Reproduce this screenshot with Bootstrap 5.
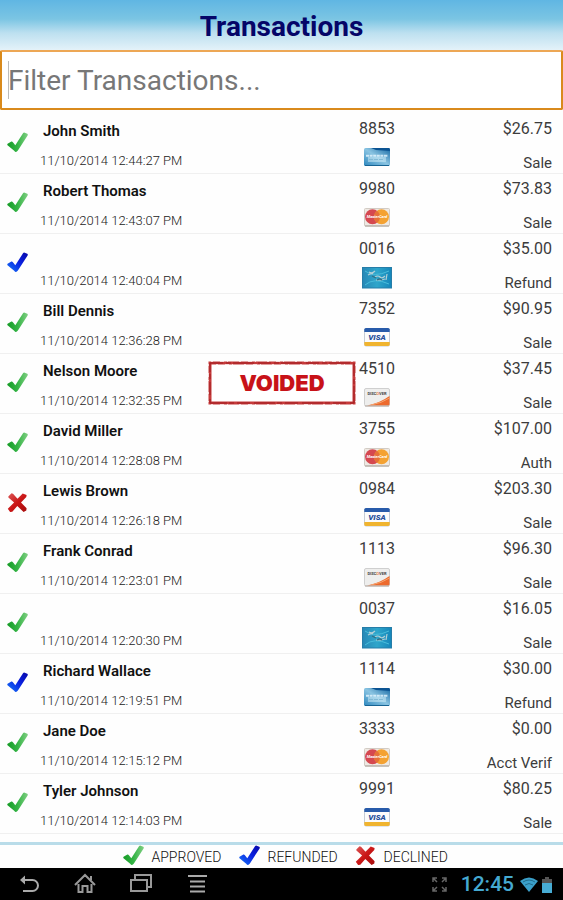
<!DOCTYPE html>
<html lang="en">
<head>
<meta charset="utf-8">
<meta name="viewport" content="width=device-width, initial-scale=1">
<title>Transactions</title>
<link href="https://cdn.jsdelivr.net/npm/bootstrap@5.3.0/dist/css/bootstrap.min.css" rel="stylesheet">
<style>
body { font-family: Roboto, "Noto Sans", sans-serif; font-size: 16px; color: #3c3c3c; background: #fefefe; }
svg { display: block; flex: none; }
.title-bar { height: 50px; padding-top: 2px; background: linear-gradient(#60b6e3, #7bc5e3 38%, #bde0f0 66%, #e4f2f9); }
.title-bar h1 { font-size: 28px; line-height: 50px; font-weight: 700; color: #050568; }
.filter-box { height: 60px; border: 2px solid #d98a1c; border-top-color: #eda755; border-radius: 2px; padding: 0 6px; font-size: 28px; color: #333; }
.filter-box:focus { border-color: #d98a1c; box-shadow: none; }
.filter-box::placeholder { color: #777; }
.filter-wrap::after { content: ""; position: absolute; left: 8px; top: 11px; width: 1px; height: 38px; background: #bbb; }
.txn { height: 60px; border-bottom: 1px solid #f0f0f0; }
.status { width: 40px; padding: 18px 0 0 7px; }
.who { padding-top: 9px; }
.who-name { height: 20px; line-height: 17px; padding-left: 3px; font-size: 15px; font-weight: 600; color: #111; }
.who-time { font-size: 13px; line-height: 16px; margin-top: 10px; font-weight: 300; color: #222; }
.last-four { width: 36px; padding-top: 5px; margin-left: 3px; }
.digits { line-height: 20px; }
.last-four svg { margin-top: 8px; }
.amount { width: 168px; padding: 5px 11px 0 0; }
.kind { font-size: 15px; line-height: 20px; margin-top: 14px; }
.stamp { margin-top: 7px; }
.legend { height: 26px; border-top: 3px solid #b9dce9; font-size: 14px; line-height: 24px; font-weight: 300; color: #111; padding-left: 30px; }
.legend-item { width: 116px; }
.legend-item span { margin-left: 8px; }
.sys-bar { height: 33px; background: #000; padding: 0 11px 0 17px; }
.sys-bar button { width: 24px; height: 24px; margin-right: 32px; }
.clock { font-size: 21px; line-height: 33px; font-weight: 500; color: #45a9d1; margin: 0 6px 0 14px; }
</style>
<script src="https://cdn.jsdelivr.net/npm/bootstrap@5.3.0/dist/js/bootstrap.bundle.min.js"></script>
</head>
<body class="d-flex flex-column min-vh-100">
<svg width="0" height="0" class="position-absolute" aria-hidden="true">
  <defs>
    <linearGradient id="gGreen"><stop offset="0" stop-color="#169c26"/><stop offset=".5" stop-color="#34b445"/><stop offset="1" stop-color="#80cf83"/></linearGradient>
    <linearGradient id="gBlue" x1="1" y1="0" x2="0" y2="1"><stop offset="0" stop-color="#0808a8"/><stop offset=".45" stop-color="#0a20e0"/><stop offset="1" stop-color="#1878f8"/></linearGradient>
    <linearGradient id="gRed" x2="1" y2="1"><stop offset="0" stop-color="#dc5959"/><stop offset=".5" stop-color="#cb1717"/><stop offset="1" stop-color="#a60c0c"/></linearGradient>
    <linearGradient id="gAmex" x1="0" y1="1" x2="1" y2="0"><stop offset="0" stop-color="#2b86bd"/><stop offset=".5" stop-color="#8ac4e2"/><stop offset="1" stop-color="#1769a4"/></linearGradient>
    <linearGradient id="gGift"><stop offset="0" stop-color="#2787b6"/><stop offset=".5" stop-color="#2fa6cb"/><stop offset="1" stop-color="#1586ba"/></linearGradient>
    <path id="tick" d="M.6 11.8 4.4 9.6Q5.2 9.3 5.9 10.3L8.3 13.2 16 1.3Q16.7.2 17.7.7L20.3 1.8Q21.2 2.4 20.6 3.4L10.9 18.4Q9 21.2 7.2 18.7L.5 13.2Q0 12.3.6 11.8Z"/>
  </defs>
  <symbol id="approved" viewBox="0 0 21 21"><use href="#tick" fill="url(#gGreen)"/></symbol>
  <symbol id="refunded" viewBox="0 0 21 21"><use href="#tick" fill="url(#gBlue)"/></symbol>
  <symbol id="declined" viewBox="0 0 21 21"><path fill="url(#gRed)" d="M1.3 4.4 4.5 1.2 6 1.7 10.5 6.7 15.7 1.5 19.6 3.1 19.3 5.1 14 10.5 19.6 16.2 19.3 18.5 16.6 20 10.3 14.1 5.3 19.7 3.1 19.9.8 16.8 7.1 10.4 1.4 5.4Z"/></symbol>
</svg>

<header class="title-bar text-center"><h1 class="m-0">Transactions</h1></header>
<div class="filter-wrap position-relative">
  <input id="filter" type="text" class="form-control filter-box bg-white" placeholder="Filter Transactions..." aria-label="Filter Transactions">
</div>

<ul id="transactions" class="list-unstyled mb-2 mt-1"></ul>

<footer class="mt-auto">
  <div class="legend d-flex justify-content-center">
    <div class="legend-item d-flex"><svg width="21" height="21"><use href="#approved"/></svg><span>APPROVED</span></div>
    <div class="legend-item d-flex"><svg width="21" height="21"><use href="#refunded"/></svg><span>REFUNDED</span></div>
    <div class="legend-item d-flex"><svg width="21" height="21"><use href="#declined"/></svg><span>DECLINED</span></div>
  </div>
  <nav class="sys-bar d-flex align-items-center" aria-label="System">
    <button class="btn p-0 border-0" aria-label="Back"><svg width="24" height="24" fill="none" stroke="#aaa" stroke-width="2"><path d="M6 7h9.500a5.500 5.500 0 0 1 0 11H6"/><path d="M8 2.500 3 7l5 4.500Z" fill="#aaa" stroke="none"/></svg></button>
    <button class="btn p-0 border-0" aria-label="Home"><svg width="24" height="24" fill="none" stroke="#999" stroke-width="2"><path d="m2 12 10-10 10 10M5.500 11v8h4v-6h5v6h4v-8M18 7V3"/></svg></button>
    <button class="btn p-0 border-0" aria-label="Recent apps"><svg width="24" height="24" fill="none" stroke="#999" stroke-width="2"><path d="M2 7h16v11H2zM6 6V2h16v12h-3"/></svg></button>
    <button class="btn p-0 border-0" aria-label="Menu"><svg width="24" height="24" fill="none" stroke="#aaa" stroke-width="2"><path d="M3 3h19M5 8.500h15M5 13.500h15M5 18.500h15"/></svg></button>
    <svg class="ms-auto" width="15" height="15" fill="none" stroke="#666" stroke-width="1.500"><path d="M1 5V1h4M1 1l4 4M10 1h4v4m0-4-4 4M1 10v4h4m-4 0 4-4m5 4h4v-4m0 4-4-4"/></svg>
    <span class="clock">12:45</span>
    <svg width="18" height="15"><path d="M0 4Q9-3 18 4L9 15Z" fill="#3ba0ca"/><path d="M3 5q6-4 12 0M5 8q4-3 8 0" fill="none" stroke="#216c8b"/></svg>
    <svg class="ms-1" width="10" height="16"><path d="M3 0h4v2h3v4H0V2h3z" fill="#555"/><path d="M0 6h10v10H0z" fill="#47acd4"/></svg>
  </nav>
</footer>

<template id="amex"><svg width="28" height="20" role="img" aria-label="American Express"><rect x="1" y="1" width="26" height="18" rx="1.5" fill="url(#gAmex)"/><path d="M8 1H26Q27 1 27 4L13 3Z" fill="#0b5392"/><path d="M3 8.7h22" stroke="#e8f7ff" stroke-width="2" stroke-dasharray="3 .6" opacity=".8"/><path d="M5 10h18v5H5z" fill="#d2edf7" opacity=".5"/><path d="M6 12.5h15" stroke="#82b9d5" stroke-dasharray="4 1"/><path d="M2 18.5h24" stroke="#176393"/></svg></template>
<template id="mastercard"><svg width="28" height="20" role="img" aria-label="MasterCard"><rect x="1.5" y="1.5" width="25" height="17.5" rx="1" fill="#eee9e3" stroke="#d2cbc4"/><circle cx="9.500" cy="9.8" r="7.5" fill="#d54850"/><circle cx="18.5" cy="9.8" r="7.5" fill="#f4a232"/><path d="M14 3.800a7.5 7.5 0 0 1 0 12 7.5 7.5 0 0 1 0-12" fill="#e67139"/><text x="14" y="11" text-anchor="middle" font-size="4" font-style="italic" font-weight="700" fill="#fff">MasterCard</text><path d="M2 19h24" stroke="#aaa198"/></svg></template>
<template id="gift"><svg width="30" height="22" role="img" aria-label="Gift card"><rect x=".5" y=".5" width="29" height="20.5" fill="url(#gGift)" stroke="#267da8"/><path d="M3 4Q12 11 27 4M3 18Q12 10 27 17" stroke="#49bddb" fill="none"/><path d="M7 5q3 2 6-1M6 8q4-2 5-1m2 3q3-2 5 0t5-1m2-2-1 6m-10 0h5l4-1" stroke="#b5cfd6" stroke-width="1.2" fill="none"/><path d="m10 9 4 2m1 2q3-2 5 0" stroke="#326f85" stroke-width="1.3" fill="none"/></svg></template>
<template id="visa"><svg width="28" height="20" role="img" aria-label="Visa"><rect x="1.5" y="1.5" width="25" height="17.5" rx="1.5" fill="#fbfbfb" stroke="#c5ccd6"/><path d="M1.3 5V2.5Q1.3 1 3 1H25Q26.7 1 26.7 2.5V5Z" fill="#285baa"/><path d="M1.3 15H26.7V17.5Q26.7 19 25 19H3Q1.3 19 1.3 17.5Z" fill="#f0b42f"/><text x="14" y="13" text-anchor="middle" font-size="8" font-weight="900" font-style="italic" fill="#28509c">VISA</text></svg></template>
<template id="discover"><svg width="28" height="20" role="img" aria-label="Discover"><rect x="1.5" y="1.5" width="25" height="17.5" rx="1.5" fill="#eeeeed" stroke="#cfcfcf"/><path d="M4 18.5Q17 16 26.5 9V17.5Q26.5 18.5 25 18.5Z" fill="#ed6a2d"/><path d="M8 18Q19 16 26.5 11" stroke="#f6a36e" fill="none"/><text x="14" y="8" text-anchor="middle" font-size="4" font-weight="700" fill="#444">DISC<tspan fill="#ee8550">O</tspan>VER</text><path d="M2 19h24" stroke="#b7aaa1"/></svg></template>
<template id="voided">
  <svg class="stamp" width="148" height="44" role="img" aria-label="Voided">
    <rect x="2" y="2" width="144" height="40" fill="#fff" stroke="#c63a3a" stroke-width="3"/>
    <path d="M2 2h144v40H2Z" fill="none" stroke="#9f1c20" stroke-width="1" stroke-dasharray="13 3 5 2 21 4"/>
    <path d="M3 .5h142M.5 3v38M3 43.5h142M147.5 3v38M8 3.5h130" fill="none" stroke="#f6dcdc" stroke-dasharray="2 7 4 3 1 11"/>
    <text x="74" y="30" text-anchor="middle" font-family="Inter, 'Liberation Sans', sans-serif" font-size="22" font-weight="900" fill="#c81218">VOIDED</text>
  </svg>
</template>
<script>
const transactions = [
  ["approved", "John Smith", "12:44:27", "8853", "amex", "$26.75", "Sale"],
  ["approved", "Robert Thomas", "12:43:07", "9980", "mastercard", "$73.83", "Sale"],
  ["refunded", "", "12:40:04", "0016", "gift", "$35.00", "Refund"],
  ["approved", "Bill Dennis", "12:36:28", "7352", "visa", "$90.95", "Sale"],
  ["approved", "Nelson Moore", "12:32:35", "4510", "discover", "$37.45", "Sale", true],
  ["approved", "David Miller", "12:28:08", "3755", "mastercard", "$107.00", "Auth"],
  ["declined", "Lewis Brown", "12:26:18", "0984", "visa", "$203.30", "Sale"],
  ["approved", "Frank Conrad", "12:23:01", "1113", "discover", "$96.30", "Sale"],
  ["approved", "", "12:20:30", "0037", "gift", "$16.05", "Sale"],
  ["refunded", "Richard Wallace", "12:19:51", "1114", "amex", "$30.00", "Refund"],
  ["approved", "Jane Doe", "12:15:12", "3333", "mastercard", "$0.00", "Acct Verif"],
  ["approved", "Tyler Johnson", "12:14:03", "9991", "visa", "$80.25", "Sale"]
];
const art = id => document.getElementById(id).innerHTML;
const list = document.getElementById("transactions");
function render(filter) {
  list.innerHTML = transactions.filter(t => t.join(" ").toLowerCase().includes(filter)).map(([status, name, time, digits, card, amount, kind, voided]) => `
    <li class="txn d-flex">
      <div class="status"><svg width="21" height="21" role="img" aria-label="${status}"><use href="#${status}"/></svg></div>
      <div class="who flex-grow-1"><div class="who-name">${name}</div><div class="who-time text-nowrap">11/10/2014 ${time} PM</div></div>
      ${voided ? art("voided") : ""}
      <div class="last-four d-flex flex-column align-items-center"><div class="digits">${digits}</div>${art(card)}</div>
      <div class="amount text-end"><div class="digits">${amount}</div><div class="kind">${kind}</div></div>
    </li>`).join("");
}
render("");
document.getElementById("filter").addEventListener("input", e => render(e.target.value.toLowerCase()));
</script>
</body>
</html>
